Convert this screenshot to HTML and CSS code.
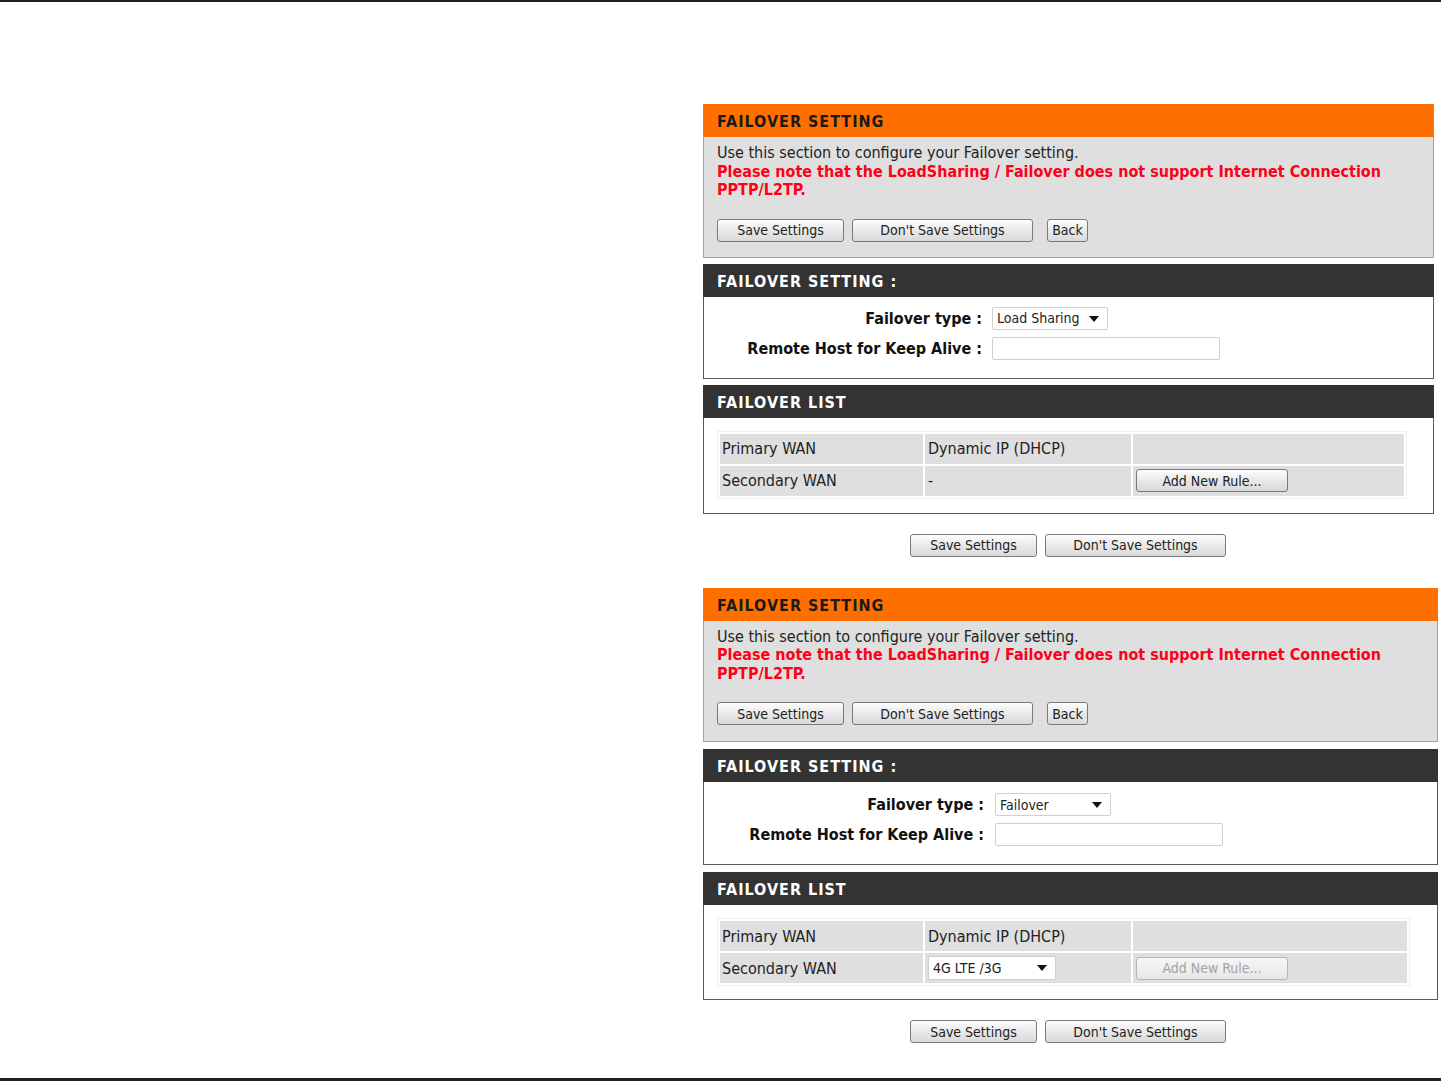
FILE: index.html
```html
<!DOCTYPE html>
<html lang="en">
<head>
    <meta charset="UTF-8">
    <title>Failover Setting</title>
    <link rel="stylesheet" href="styles.css">
</head>
<body>
<div class="page">
    <div class="panel panel-a">

        <div class="intro">
            <div class="hd hd-orange">FAILOVER SETTING</div>
            <div class="intro-body">
                <p class="note">Use this section to configure your Failover setting.</p>
                <p class="warn">Please note that the LoadSharing / Failover does not support Internet Connection PPTP/L2TP.</p>
                <div class="btns">
                    <button class="btn btn-save">Save Settings</button>
                    <button class="btn btn-nosave">Don't Save Settings</button>
                    <button class="btn btn-back">Back</button>
                </div>
            </div>
        </div>

        <div class="box">
            <div class="hd hd-dark">FAILOVER SETTING :</div>
            <div class="box-body form">
                <label>Failover type :</label>
                <span class="select-wrap sel-type"><select><option>Load Sharing</option><option>Failover</option></select></span>
                <label>Remote Host for Keep Alive :</label>
                <input type="text" class="text-in">
            </div>
        </div>

        <div class="box">
            <div class="hd hd-dark">FAILOVER LIST</div>
            <div class="box-body list">
                <table class="wan">
                    <tr><td class="c1">Primary WAN</td><td class="c2">Dynamic IP (DHCP)</td><td class="c3"></td></tr>
                    <tr><td class="c1">Secondary WAN</td><td class="c2">-</td><td class="c3"><button class="btn btn-add">Add New Rule...</button></td></tr>
                </table>
            </div>
        </div>

        <div class="btns-bottom">
            <button class="btn btn-save">Save Settings</button>
            <button class="btn btn-nosave">Don't Save Settings</button>
        </div>
    </div>

    <div class="panel panel-b">

        <div class="intro">
            <div class="hd hd-orange">FAILOVER SETTING</div>
            <div class="intro-body">
                <p class="note">Use this section to configure your Failover setting.</p>
                <p class="warn">Please note that the LoadSharing / Failover does not support Internet Connection PPTP/L2TP.</p>
                <div class="btns">
                    <button class="btn btn-save">Save Settings</button>
                    <button class="btn btn-nosave">Don't Save Settings</button>
                    <button class="btn btn-back">Back</button>
                </div>
            </div>
        </div>

        <div class="box">
            <div class="hd hd-dark">FAILOVER SETTING :</div>
            <div class="box-body form">
                <label>Failover type :</label>
                <span class="select-wrap sel-type"><select><option>Failover</option><option>Load Sharing</option></select></span>
                <label>Remote Host for Keep Alive :</label>
                <input type="text" class="text-in">
            </div>
        </div>

        <div class="box">
            <div class="hd hd-dark">FAILOVER LIST</div>
            <div class="box-body list">
                <table class="wan">
                    <tr><td class="c1">Primary WAN</td><td class="c2">Dynamic IP (DHCP)</td><td class="c3"></td></tr>
                    <tr><td class="c1">Secondary WAN</td><td class="c2"><span class="select-wrap sel-wan"><select><option>4G LTE /3G</option></select></span></td><td class="c3"><button class="btn btn-add" disabled>Add New Rule...</button></td></tr>
                </table>
            </div>
        </div>

        <div class="btns-bottom">
            <button class="btn btn-save">Save Settings</button>
            <button class="btn btn-nosave">Don't Save Settings</button>
        </div>
    </div>
</div>
</body>
</html>
```

FILE: styles.css
```css
body {
    margin: 0;
    font-family: "DejaVu Sans Condensed", "DejaVu Sans", sans-serif;
    font-stretch: condensed;
    color: #222;
    background: #fff;
}
.page {
    height: 1081px;
    box-sizing: border-box;
    border-top: 2px solid #231f20;
    border-bottom: 3px solid #231f20;
    padding-top: 102px;
}
.panel {
    margin-left: 703px;
    width: 731px;
}
.panel-b {
    width: 735px;
}
p {
    margin: 0;
}
.hd {
    height: 33px;
    line-height: 35px;
    padding-left: 14px;
    font-size: 16px;
    font-weight: bold;
    letter-spacing: 1px;
}
.hd-orange {
    background: #ff6f00;
    color: #1a1a1a;
}
.hd-dark {
    background: #333;
    color: #fff;
}
.intro-body {
    background: #dfdfdf;
    border: 1px solid #ff8a33;
    border-top: none;
    padding: 7px 13px 15px;
}
.panel-b .intro-body {
    padding-bottom: 16px;
}
.note, .warn {
    font-size: 16px;
    line-height: 18.5px;
}
.warn {
    color: #ff0019;
    font-weight: bold;
}
.btns {
    margin-top: 19px;
    display: flex;
    gap: 8px;
}
.btn {
    height: 23px;
    padding: 0;
    font-family: inherit;
    font-stretch: condensed;
    font-size: 14px;
    color: #222;
    background: linear-gradient(#fdfdfd, #e9e9e9 50%, #d9d9d9);
    border: 1px solid #7a7a7a;
    border-radius: 3px;
    cursor: pointer;
}
.btn-save { width: 127px; }
.btn-nosave { width: 181px; }
.btn-back { width: 41px; margin-left: 6px; }
.btn-add { width: 152px; }
.btn:disabled {
    color: #a3a3a3;
    border-color: #b5b5b5;
    background: linear-gradient(#f6f6f6, #e7e7e7);
}
.box {
    margin-top: 6px;
}
.panel-b .box {
    margin-top: 7px;
}
.box-body {
    border: 1px solid #5a5a5a;
    border-top: none;
    background: #fff;
}
.form {
    display: grid;
    grid-template-columns: 278px 228px;
    grid-auto-rows: 23px;
    column-gap: 10px;
    row-gap: 7px;
    align-items: center;
    padding: 10px 0 18px;
}
.panel-b .form {
    grid-template-columns: 280px 228px;
    column-gap: 11px;
    padding: 11px 0 18px;
}
.form label {
    text-align: right;
    font-size: 16px;
    line-height: 23px;
    font-weight: bold;
    color: #111;
}
.select-wrap {
    position: relative;
    display: inline-block;
    justify-self: start;
    vertical-align: middle;
}
.select-wrap::after {
    content: "";
    position: absolute;
    right: 9px;
    top: 9px;
    border-left: 5px solid transparent;
    border-right: 5px solid transparent;
    border-top: 6px solid #111;
    pointer-events: none;
}
.select-wrap select {
    appearance: none;
    -webkit-appearance: none;
    display: block;
    height: 23px;
    padding: 0 0 0 4px;
    font-family: inherit;
    font-stretch: condensed;
    font-size: 14px;
    color: #222;
    background: #fff;
    border: 1px solid #d0d0d0;
    border-radius: 2px;
}
.sel-type select { width: 116px; }
.sel-wan select { width: 128px; height: 24px; }
.text-in {
    width: 228px;
    height: 23px;
    box-sizing: border-box;
    border: 1px solid #cfcfcf;
    border-radius: 2px;
}
.list {
    padding: 13px 0 14px 13px;
}
.panel-b .list {
    padding: 13px 0 13px 13px;
}
.wan {
    width: 690px;
    border-collapse: separate;
    border-spacing: 2px;
    background: #fff;
    border: 1px solid #eee;
}
.panel-b .wan {
    width: 693px;
}
.wan td {
    height: 30px;
    padding: 0 2px;
    background: #dfdfdf;
    font-size: 16px;
    line-height: 19px;
    color: #222;
}
.wan .c1 { width: 199px; }
.wan .c2 { width: 201px; padding-left: 3px; }
.wan .c3 { padding-left: 3px; }
.btns-bottom {
    display: flex;
    gap: 8px;
    padding: 20px 0 31px 207px;
}
```
